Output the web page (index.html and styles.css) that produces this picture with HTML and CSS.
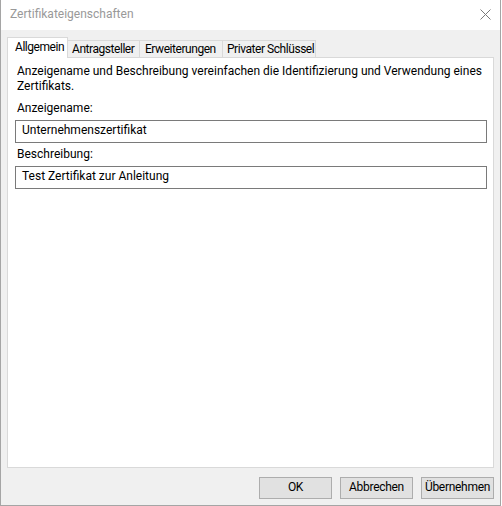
FILE: index.html
```html
<!DOCTYPE html>
<html lang="de">
<head>
<meta charset="utf-8">
<title>Zertifikateigenschaften</title>
<link rel="stylesheet" href="styles.css">
</head>
<body>
<div class="window">
  <div class="titlebar">
    <span class="title">Zertifikateigenschaften</span>
    <svg class="close" width="11" height="11" viewBox="0 0 11 11" aria-hidden="true">
      <path d="M0.5 0.5 L10.5 10.5 M10.5 0.5 L0.5 10.5" stroke="#7a7a7a" stroke-width="1" fill="none"/>
    </svg>
  </div>
  <div class="client">
    <div class="tabs">
      <div class="tab active t1">Allgemein</div>
      <div class="tab t2">Antragsteller</div>
      <div class="tab t3">Erweiterungen</div>
      <div class="tab t4">Privater Schlüssel</div>
    </div>
    <div class="panel">
      <p class="desc"><span class="line">Anzeigename und Beschreibung vereinfachen die Identifizierung und Verwendung eines</span><br><span class="line">Zertifikats.</span></p>
      <div class="label l1">Anzeigename:</div>
      <div class="field f1">Unternehmenszertifikat</div>
      <div class="label l2">Beschreibung:</div>
      <div class="field f2">Test Zertifikat zur Anleitung</div>
    </div>
    <div class="buttons">
      <div class="btn">OK</div>
      <div class="btn">Abbrechen</div>
      <div class="btn">Übernehmen</div>
    </div>
  </div>
</div>
</body>
</html>
```
FILE: styles.css
```css
html, body {
  margin: 0;
  padding: 0;
  background: #ffffff;
}
body {
  width: 502px;
  height: 506px;
  overflow: hidden;
  font-family: Roboto, "Noto Sans", sans-serif;
  font-size: 12px;
  color: #000000;
}
.window {
  width: 501px;
  height: 506px;
  box-sizing: border-box;
  border-left: 1px solid #a5a5a5;
  border-right: 1px solid #a5a5a5;
  border-bottom: 1px solid #a5a5a5;
  background: #f0f0f0;
  display: flex;
  flex-direction: column;
}
.titlebar {
  height: 30px;
  background: #ffffff;
  display: flex;
  justify-content: space-between;
  align-items: flex-start;
  flex: none;
}
.title {
  color: #999999;
  line-height: 28px;
  padding-left: 9px;
  white-space: nowrap;
}
.close {
  margin-top: 9px;
  margin-right: 9px;
  display: block;
}
.client {
  flex: 1;
  display: flex;
  flex-direction: column;
}
.tabs {
  display: flex;
  align-items: flex-end;
  margin-top: 7px;
  margin-left: 6px;
  height: 20px;
  position: relative;
  z-index: 1;
}
.tab {
  box-sizing: border-box;
  height: 17px;
  border: 1px solid #d9d9d9;
  border-bottom: none;
  border-left: none;
  background: #f0f0f0;
  line-height: 16px;
  letter-spacing: -0.45px;
  white-space: nowrap;
  overflow: hidden;
}
.tab.active {
  height: 21px;
  margin-bottom: -1px;
  border-left: 1px solid #d9d9d9;
  background: #ffffff;
  line-height: 15px;
  padding-top: 2px;
}
.t1 { width: 61px; padding-left: 7px; }
.t2 { width: 72px; padding-left: 4px; }
.t3 { width: 83px; padding-left: 5px; }
.t4 { width: 93px; padding-left: 4px; }
.panel {
  box-sizing: border-box;
  margin-left: 6px;
  width: 487px;
  height: 411px;
  border: 1px solid #d9d9d9;
  background: #ffffff;
  padding: 6px 6px 0 7px;
}
.desc {
  margin: 0 0 0 2px;
  line-height: 15px;
}
.line {
  white-space: nowrap;
}
.label {
  margin-left: 2px;
  line-height: 15px;
  white-space: nowrap;
}
.l1 { margin-top: 7px; }
.l2 { margin-top: 4px; }
.field {
  box-sizing: border-box;
  width: 472px;
  height: 23px;
  border: 1px solid #7a7a7a;
  background: #ffffff;
  line-height: 18px;
  padding: 0 6px;
  white-space: nowrap;
}
.f1 { margin-top: 4px; }
.f2 { margin-top: 4px; }
.buttons {
  display: flex;
  justify-content: flex-end;
  gap: 8px;
  margin-top: 9px;
  margin-right: 6px;
}
.btn {
  box-sizing: border-box;
  width: 73px;
  height: 22px;
  border: 1px solid #adadad;
  background: #e1e1e1;
  text-align: center;
  line-height: 18px;
  letter-spacing: -0.3px;
}
```
